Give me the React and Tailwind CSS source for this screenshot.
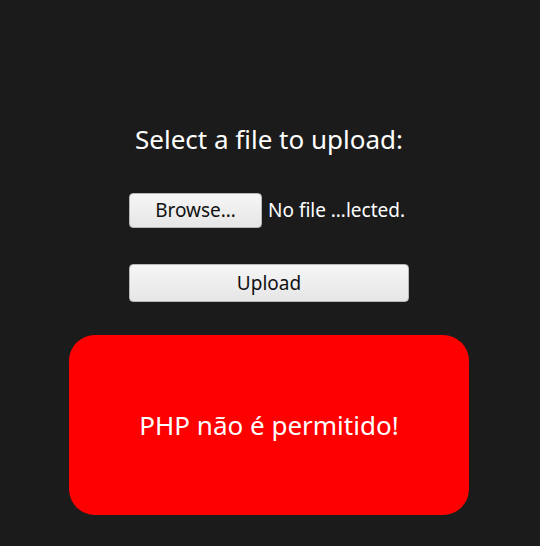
export default function App() {
  return (
    <div className="min-h-[546px] w-full pr-[2px] bg-[#1b1b1b] text-white flex flex-col items-center" style={{ fontFamily: '"Noto Sans", "Open Sans", sans-serif' }}>
      <h1 className="mt-[122px] text-[26px] leading-[34px] font-normal">Select a file to upload:</h1>
      <div className="mt-[37px] flex items-center w-[280px]">
        <button className="w-[133px] h-[35px] rounded-[4px] border border-[#b8b8b8] bg-gradient-to-b from-[#f6f6f6] to-[#e6e6e6] text-[#111] text-[19px]">Browse…</button>
        <span className="ml-[6px] text-[19px]">No file …lected.</span>
      </div>
      <button className="mt-[36px] w-[280px] h-[38px] rounded-[4px] border border-[#b8b8b8] bg-gradient-to-b from-[#f6f6f6] to-[#e6e6e6] text-[#111] text-[19px]">Upload</button>
      <div className="mt-[33px] w-[400px] h-[180px] rounded-[26px] bg-[#ff0000] flex items-center justify-center">
        <span className="text-[26px]">PHP não é permitido!</span>
      </div>
    </div>
  );
}
